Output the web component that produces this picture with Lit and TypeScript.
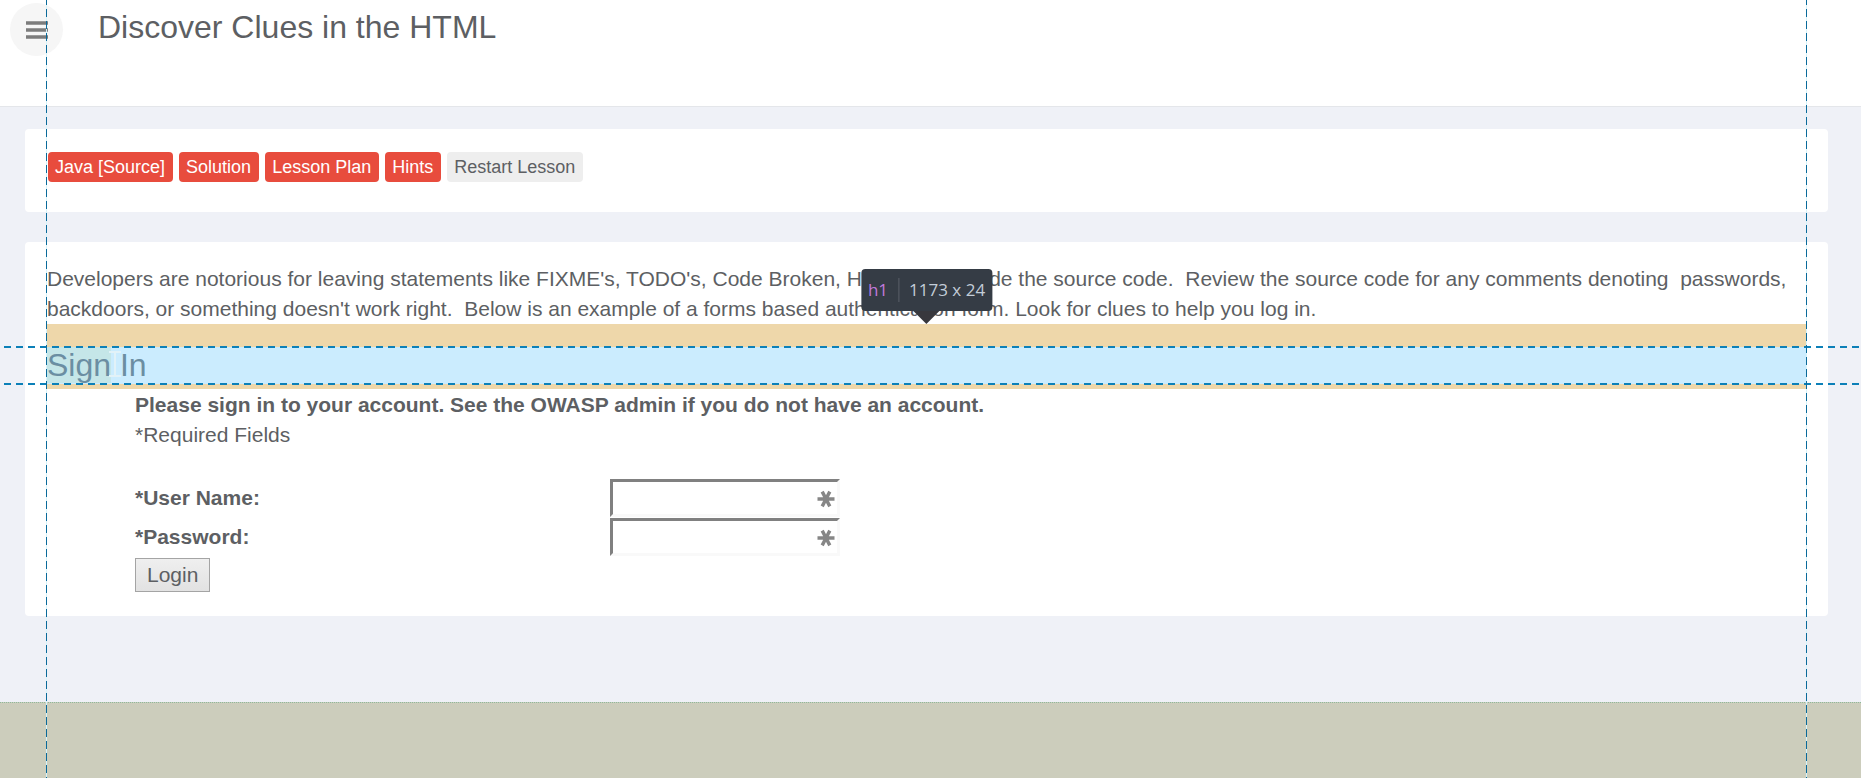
import { LitElement, html, css } from "lit";
import { customElement } from "lit/decorators.js";

@customElement("sign-in-form")
class SignInForm extends LitElement {
  static styles = css`
    :host {
      display: block;
      padding: 1px 0 0 88px;
    }
    .line {
      margin: 0;
      line-height: 30px;
    }
    .strong,
    .label {
      font-weight: bold;
    }
    .fields {
      display: grid;
      grid-template-columns: 475px max-content;
      row-gap: 1px;
      align-items: center;
      margin: 29px 0 2px;
    }
    .label {
      line-height: 32px;
    }
    .field {
      display: flex;
      position: relative;
    }
    .input {
      box-sizing: border-box;
      width: 230px;
      height: 38px;
      padding: 0 32px 0 4px;
      border: 3px solid;
      border-color: #808080 #f9f9f9 #f9f9f9 #808080;
      background: #fff;
      font: inherit;
      color: inherit;
    }
    .star {
      position: absolute;
      right: 5px;
      top: 11px;
      width: 18px;
      height: 18px;
      pointer-events: none;
    }
    .login {
      display: block;
      box-sizing: border-box;
      height: 34px;
      padding: 0 11px;
      border: 1px solid #a4a4a4;
      border-radius: 0;
      background: linear-gradient(#efefef, #e2e2e2);
      font: inherit;
      color: inherit;
    }
  `;

  private star() {
    return html`<svg class="star" viewBox="0 0 18 18" aria-hidden="true">
      <path d="M0.5 9H17.5M5.2 1.6L12.8 16.4M12.8 1.6L5.2 16.4" stroke="#868686" stroke-width="3.4" fill="none" />
    </svg>`;
  }

  render() {
    return html`
      <form @submit=${(e: Event) => e.preventDefault()}>
        <p class="line strong">Please sign in to your account. See the OWASP admin if you do not have an account.</p>
        <p class="line">*Required Fields</p>
        <div class="fields">
          <label class="label" for="user">*User Name:</label>
          <div class="field"><input class="input" id="user" type="text" />${this.star()}</div>
          <label class="label" for="pass">*Password:</label>
          <div class="field"><input class="input" id="pass" type="password" />${this.star()}</div>
        </div>
        <button class="login" type="submit">Login</button>
      </form>
    `;
  }
}

@customElement("app-root")
class AppRoot extends LitElement {
  static styles = css`
    :host {
      display: flex;
      flex-direction: column;
      position: relative;
      overflow: hidden;
      min-height: 100vh;
      background: #eff1f7;
      color: #5d5f63;
      font: 21px/30px "Liberation Sans", Arial, sans-serif;
    }
    .header {
      display: flex;
      align-items: flex-start;
      gap: 35px;
      padding: 3px 10px 50px;
      background: #fff;
      border-bottom: 1px solid #e4e6ea;
    }
    .menu {
      display: grid;
      place-items: center;
      width: 53px;
      height: 53px;
      padding: 0;
      border: 0;
      border-radius: 50%;
      background: #f6f6f6;
    }
    .bars {
      width: 22px;
      height: 18px;
    }
    .title {
      margin: 4px 0 0;
      font-size: 32px;
      font-weight: normal;
      line-height: 40px;
    }
    .main {
      display: flex;
      flex-direction: column;
      gap: 30px;
      padding: 22px 33px 86px 25px;
    }
    .panel {
      padding: 22px 22px 24px;
      border-radius: 4px;
      background: #fff;
    }
    .tools {
      display: flex;
      gap: 6px;
      padding: 23px 23px 30px;
    }
    .tool {
      height: 30px;
      padding: 0 8px 0 7px;
      border: 0;
      border-radius: 4px;
      background: #e84c3d;
      color: #fff;
      font-family: inherit;
      font-size: 18px;
    }
    .plain {
      background: #eee;
      color: #5d5f63;
    }
    .intro {
      margin: 0;
    }
    .margins {
      padding: 23px 0 5px;
      background: #eed7aa;
    }
    .heading {
      position: relative;
      margin: 0;
      background: #cbecfe;
      color: #6b8ea2;
      font-size: 32px;
      font-weight: normal;
      line-height: 37px;
    }
    .picked {
      background: #c5e6e8;
    }
    .caret {
      position: absolute;
      left: 61px;
      top: 4px;
      width: 14px;
      height: 26px;
    }
    .guide-h {
      position: absolute;
      left: -47px;
      right: -55px;
      height: 2px;
      background: repeating-linear-gradient(90deg, transparent 0 4px, #0c80b8 4px 11px, transparent 11px 12px);
    }
    .above {
      top: -1px;
    }
    .below {
      bottom: -1px;
    }
    .guide-v {
      position: absolute;
      top: 0;
      bottom: 0;
      width: 1px;
      background: repeating-linear-gradient(#0a6a9a 0 5px, #d5f3fb 5px 9px, #0a6a9a 9px 12px);
    }
    .start {
      left: 46px;
    }
    .end {
      right: 54px;
    }
    .tip {
      position: absolute;
      left: 50%;
      bottom: 73px;
      display: flex;
      align-items: center;
      height: 42px;
      padding: 0 7px;
      border-radius: 4px;
      background: #353c45;
      color: #c3cdd8;
      font: 17px/42px "Open Sans", "Noto Sans", sans-serif;
      white-space: nowrap;
      transform: translateX(-50%);
    }
    .tip::after {
      content: "";
      position: absolute;
      left: 50%;
      top: 100%;
      margin-left: -13px;
      border: 13px solid transparent;
      border-top-color: #38383d;
      border-bottom: 0;
    }
    .tag {
      margin-right: 10px;
      padding-right: 10px;
      border-right: 1px solid #5a6069;
      line-height: 24px;
      color: #c079dc;
    }
    .footer {
      flex: 1;
      border-top: 1px dotted #8fb89a;
      background: #cccdbc;
    }
  `;

  render() {
    return html`
      <header class="header">
        <button class="menu" aria-label="Menu">
          <svg class="bars" viewBox="0 0 22 18" aria-hidden="true">
            <path d="M0 2H22M0 9H22M0 16H22" stroke="#7c7c7c" stroke-width="3.4" />
          </svg>
        </button>
        <h1 class="title">Discover Clues in the HTML</h1>
      </header>
      <main class="main">
        <nav class="panel tools">
          <button class="tool">Java [Source]</button>
          <button class="tool">Solution</button>
          <button class="tool">Lesson Plan</button>
          <button class="tool">Hints</button>
          <button class="tool plain">Restart Lesson</button>
        </nav>
        <section class="panel">
          <p class="intro">
            Developers are notorious for leaving statements like FIXME's, TODO's, Code Broken, Hack, etc... inside the
            source code.&nbsp; Review the source code for any comments denoting&nbsp; passwords, backdoors, or something
            doesn't work right.&nbsp; Below is an example of a forms based authentication form. Look for clues to help
            you log in.
          </p>
          <div class="margins">
            <h1 class="heading">
              <span class="picked">Sign</span> In
              <svg class="caret" viewBox="0 0 14 26" aria-hidden="true">
                <path d="M1 1H13M1 25H13M7 1V25" stroke="#e2f2f8" stroke-width="2" />
              </svg>
              <div class="guide-h above"></div>
              <div class="guide-h below"></div>
              <div class="tip"><span class="tag">h1</span><span>1173 x 24</span></div>
            </h1>
          </div>
          <sign-in-form></sign-in-form>
        </section>
      </main>
      <footer class="footer"></footer>
      <div class="guide-v start"></div>
      <div class="guide-v end"></div>
    `;
  }
}
